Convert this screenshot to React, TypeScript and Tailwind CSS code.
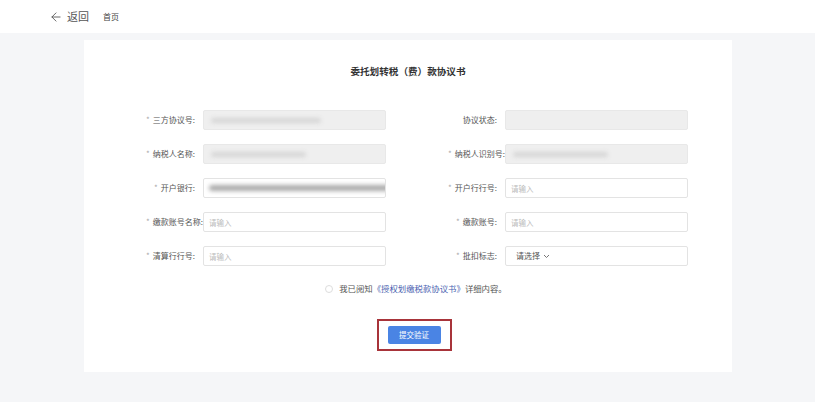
import * as React from 'react';
import { ArrowLeft } from 'lucide-react';

// Entrust tax transfer agreement form, two columns of fields.

type Field = {
  label: string;
  required?: boolean;
  tight?: boolean;
  kind: 'disabled' | 'input' | 'filled' | 'select';
  blurWidth?: number;
};

const fields: Field[] = [
  { label: '三方协议号:', required: true, kind: 'disabled', blurWidth: 110 },
  { label: '协议状态:', kind: 'disabled' },
  { label: '纳税人名称:', required: true, kind: 'disabled', blurWidth: 95 },
  { label: '纳税人识别号:', required: true, tight: true, kind: 'disabled', blurWidth: 95 },
  { label: '开户银行:', required: true, kind: 'filled' },
  { label: '开户行行号:', required: true, kind: 'input' },
  { label: '缴款账号名称:', required: true, tight: true, kind: 'input' },
  { label: '缴款账号:', required: true, kind: 'input' },
  { label: '清算行行号:', required: true, kind: 'input' },
  { label: '批扣标志:', required: true, kind: 'select' },
];

const FieldRow: React.FC<{ field: Field }> = ({ field }) => {
  let box: React.ReactNode;
  if (field.kind === 'disabled') {
    box = (
      <div className="flex-1 h-[20px] bg-[#efefef] border border-[#e8e8e8] rounded-[2px] flex items-center pl-[7px] overflow-hidden">
        {field.blurWidth ? (
          <div className="h-[5px] rounded-full bg-[#d6d6d6] blur-[2px]" style={{ width: field.blurWidth }} />
        ) : null}
      </div>
    );
  } else if (field.kind === 'filled') {
    box = (
      <div className="flex-1 h-[20px] bg-white border border-[#e3e3e3] rounded-[2px] flex items-center pl-[5px] overflow-hidden">
        <div className="h-[6px] w-[185px] shrink-0 rounded-full bg-[#aaa] blur-[2px]" />
      </div>
    );
  } else if (field.kind === 'select') {
    box = (
      <div className="flex-1 h-[20px] bg-white border border-[#e3e3e3] rounded-[2px] flex items-center pl-[10px] gap-[3px] text-[8px] text-[#555]">
        <span>请选择</span>
        <svg width="7" height="5" viewBox="0 0 7 5" fill="none">
          <path d="M1 1l2.5 2.5L6 1" stroke="#666" strokeWidth="0.9" />
        </svg>
      </div>
    );
  } else {
    box = (
      <div className="flex-1 h-[20px] bg-white border border-[#e3e3e3] rounded-[2px] flex items-center pl-[5px] text-[7.5px] text-[#bbb]">
        请输入
      </div>
    );
  }

  return (
    <div className="flex items-center h-[20px]">
      <div
        className={`w-[66px] shrink-0 whitespace-nowrap flex justify-end text-[8px] text-[#555] ${field.tight ? 'pr-0' : 'pr-[8px]'}`}
      >
        {field.required && <span className="text-[#aaa] mr-[3px]">*</span>}
        <span>{field.label}</span>
      </div>
      {box}
    </div>
  );
};

export default function App() {
  return (
    <div
      className="w-[821px] h-[408px] bg-white overflow-hidden"
      style={{ fontFamily: '"Noto Sans CJK SC", "Noto Sans", sans-serif' }}
    >
      {/* Top bar */}
      <div className="h-[33px] flex items-center pl-[49px] text-[#555]">
        <ArrowLeft size={14} strokeWidth={1.5} />
        <span className="ml-[4px] text-[11px]">返回</span>
        <span className="ml-[14px] text-[8px] text-[#444]">首页</span>
      </div>

      {/* Gray area */}
      <div className="w-[815px] h-[369px] bg-[#f5f6f8] pt-[7px]">
        <div className="ml-[84px] w-[648px] h-[332px] bg-white flex flex-col items-center">
          <h1 className="mt-[24px] text-[9.6px] font-bold text-[#333]">委托划转税（费）款协议书</h1>

          <div className="mt-[32px] self-start ml-[53px] grid grid-cols-[249px_249px] gap-x-[53px] gap-y-[14px]">
            {fields.map((f, idx) => (
              <FieldRow key={idx} field={f} />
            ))}
          </div>

          <div className="mt-[16px] flex items-center text-[8.4px] text-[#555] ml-[16px]">
            <span className="w-[8px] h-[8px] rounded-full border border-[#ddd] mr-[6px]" />
            <span>我已阅知</span>
            <span className="text-[#4a5fb0]">《授权划缴税款协议书》</span>
            <span>详细内容。</span>
          </div>

          <div className="mt-[24px] ml-[12px] border-2 border-[#a8343a] w-[75px] h-[32px] flex items-center justify-center">
            <button className="w-[53px] h-[18px] bg-[#4a84e4] rounded-[2px] text-white text-[7.5px]">提交验证</button>
          </div>
        </div>
      </div>
    </div>
  );
}
